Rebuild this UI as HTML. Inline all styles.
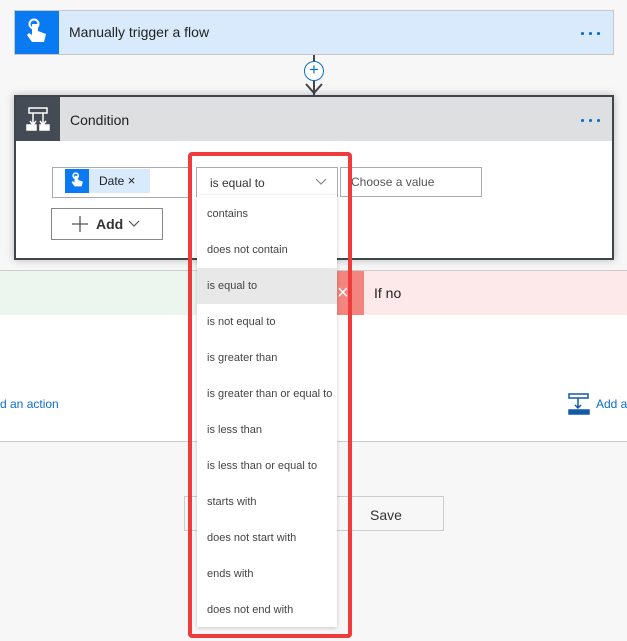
<!DOCTYPE html>
<html><head><style>
*{box-sizing:border-box;margin:0;padding:0}
body{width:627px;height:641px;background:#f7f7f7;position:relative;overflow:hidden;font-family:"Liberation Sans",sans-serif;color:#333}
.a{position:absolute;white-space:nowrap}
.item{position:absolute;left:0;width:140px;height:36px;line-height:36px;padding-left:10px;font-size:11px;color:#444;white-space:nowrap;overflow:hidden}
.dots{position:absolute;width:20px;height:3px}
.dots i{position:absolute;top:0;width:2.5px;height:2.5px;background:#0a6ed1;border-radius:50%}
</style></head><body>
<!-- trigger -->
<div class="a" style="left:14px;top:10px;width:600px;height:45px;background:#d9eafd;border:1px solid #c6c6c6"></div>
<div class="a" style="left:15px;top:11px;width:44px;height:43px;background:#0a7af3"></div>
<svg class="a" style="left:26px;top:18px" width="22" height="28" viewBox="0 0 22 28"><circle cx="8" cy="6" r="4.5" fill="none" stroke="#fff" stroke-width="2"/><path d="M6 6v11l-3-2-2 2 5 7h12l2-8-8-3V6z" fill="#fff"/></svg>
<div class="a" style="left:69px;top:24px;font-size:14px;color:#222">Manually trigger a flow</div>
<div class="dots" style="left:581px;top:32px"><i style="left:0"></i><i style="left:8px"></i><i style="left:16px"></i></div>
<!-- connector -->
<div class="a" style="left:313px;top:55px;width:2px;height:40px;background:#444"></div>
<div class="a" style="left:304px;top:61px;width:20px;height:20px;border-radius:50%;border:1.5px solid #0a6ed1;background:#fff;color:#0a6ed1;font-size:17px;line-height:16px;text-align:center">+</div>
<svg class="a" style="left:304px;top:82px" width="20" height="14"><path d="M2 2l8 9 8-9" fill="none" stroke="#444" stroke-width="2"/></svg>
<!-- condition -->
<div class="a" style="left:14px;top:95px;width:600px;height:165px;background:#fff;border:2px solid #3f454d;box-shadow:0 0 8px rgba(0,0,0,.25)"></div>
<div class="a" style="left:16px;top:97px;width:596px;height:44px;background:#dedfe1"></div>
<div class="a" style="left:16px;top:97px;width:44px;height:44px;background:#454b54"></div>
<svg class="a" style="left:26px;top:107px" width="24" height="24" viewBox="0 0 24 24" fill="none" stroke="#fff" stroke-width="1.5"><rect x="3" y="1" width="18" height="5"/><path d="M7 6v12M17 6v12M4 14l3 4 3-4M14 14l3 4 3-4"/><rect x="1" y="18" width="9" height="5" fill="#fff"/><rect x="14" y="18" width="9" height="5" fill="#fff"/></svg>
<div class="a" style="left:70px;top:112px;font-size:14px;color:#222">Condition</div>
<div class="dots" style="left:581px;top:119px"><i style="left:0"></i><i style="left:8px"></i><i style="left:16px"></i></div>
<div class="a" style="left:52px;top:167px;width:140px;height:31px;border:1px solid #aaa;background:#fff"></div>
<div class="a" style="left:65px;top:169px;width:24px;height:24px;background:#0a7af3"></div>
<svg class="a" style="left:71px;top:172px" width="13" height="17" viewBox="0 0 22 28"><circle cx="8" cy="6" r="4.5" fill="none" stroke="#fff" stroke-width="2.5"/><path d="M6 6v11l-3-2-2 2 5 7h12l2-8-8-3V6z" fill="#fff"/></svg>
<div class="a" style="left:89px;top:169px;width:61px;height:24px;background:#d9eafd;font-size:12px;line-height:24px;padding-left:10px;color:#222">Date <span style="font-size:13px">×</span></div>
<div class="a" style="left:196px;top:167px;width:142px;height:30px;border:1px solid #aaa;background:#fff;font-size:12px;line-height:30px;padding-left:13px;color:#333">is equal to</div>
<svg class="a" style="left:315px;top:178px" width="12" height="8"><path d="M1 1l5 5 5-5" fill="none" stroke="#888" stroke-width="1.2"/></svg>
<div class="a" style="left:340px;top:167px;width:142px;height:30px;border:1px solid #aaa;background:#fff;font-size:12px;line-height:29px;padding-left:10px;color:#555">Choose a value</div>
<div class="a" style="left:51px;top:208px;width:112px;height:32px;border:1px solid #888;background:#fff"></div>
<svg class="a" style="left:71px;top:215px" width="18" height="18"><path d="M9 1v16M1 9h16" stroke="#555" stroke-width="1.3"/></svg>
<div class="a" style="left:96px;top:216px;font-size:14px;font-weight:bold;color:#333">Add</div>
<svg class="a" style="left:128px;top:220px" width="12" height="8"><path d="M1 1l5 5 5-5" fill="none" stroke="#555" stroke-width="1.2"/></svg>
<!-- branches -->
<div class="a" style="left:0;top:270px;width:627px;height:172px;background:#fff;border-top:1px solid #ccc;border-bottom:1px solid #ccc"></div>
<div class="a" style="left:0;top:271px;width:200px;height:44px;background:#ecf6ee"></div>
<div class="a" style="left:337px;top:271px;width:27px;height:44px;background:#f4857e;color:#fff;font-size:20px;line-height:44px;text-align:left">×</div>
<div class="a" style="left:364px;top:271px;width:263px;height:44px;background:#fde9e9"></div>
<div class="a" style="left:374px;top:285px;font-size:14px;color:#222">If no</div>
<div class="a" style="left:0;top:397px;font-size:12px;color:#0a6ed1">d an action</div>
<svg class="a" style="left:568px;top:393px" width="22" height="22" viewBox="0 0 22 22" fill="none" stroke="#1458a8" stroke-width="1.5"><rect x="1" y="1" width="19" height="4"/><path d="M10 5v10M7 12l3 3 3-3"/><rect x="1" y="17" width="20" height="4" fill="#1458a8"/></svg>
<div class="a" style="left:596px;top:397px;font-size:12px;color:#0a6ed1">Add a</div>
<div class="a" style="left:184px;top:496px;width:260px;height:35px;border:1px solid #ccc;background:#f7f7f7"></div>
<div class="a" style="left:370px;top:507px;font-size:14px;color:#333">Save</div>
<!-- dropdown -->
<div class="a" style="left:197px;top:195px;width:140px;height:432px;background:#fff;box-shadow:0 1px 4px rgba(0,0,0,.2)">
<div class="item" style="top:1px">contains</div>
<div class="item" style="top:37px">does not contain</div>
<div class="item" style="top:73px;background:#e8e8e8">is equal to</div>
<div class="item" style="top:109px">is not equal to</div>
<div class="item" style="top:145px">is greater than</div>
<div class="item" style="top:181px">is greater than or equal to</div>
<div class="item" style="top:217px">is less than</div>
<div class="item" style="top:253px">is less than or equal to</div>
<div class="item" style="top:289px">starts with</div>
<div class="item" style="top:325px">does not start with</div>
<div class="item" style="top:361px">ends with</div>
<div class="item" style="top:397px">does not end with</div>
</div>
<div class="a" style="left:188px;top:152px;width:164px;height:486px;border:4px solid #ef3b3b;border-radius:4px"></div>
</body></html>
